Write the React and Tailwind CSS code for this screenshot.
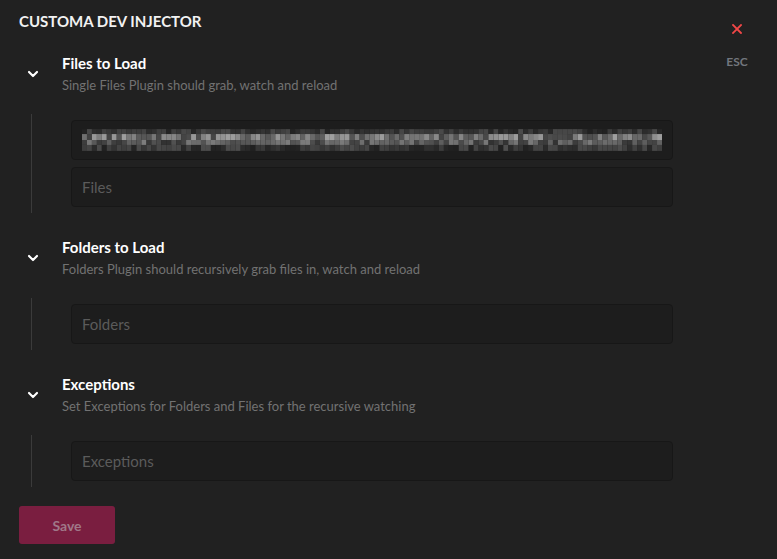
import { ChevronDown } from 'lucide-react';

const SECTIONS = [
  {
    title: 'Files to Load',
    note: 'Single Files Plugin should grab, watch and reload',
    fields: [{ blurred: true }, { placeholder: 'Files' }],
  },
  {
    title: 'Folders to Load',
    note: 'Folders Plugin should recursively grab files in, watch and reload',
    fields: [{ placeholder: 'Folders' }],
  },
  {
    title: 'Exceptions',
    note: 'Set Exceptions for Folders and Files for the recursive watching',
    fields: [{ placeholder: 'Exceptions' }],
  },
];

// pixelated path, stands in for the redacted value
function Mosaic() {
  let seed = 7;
  const rand = () => {
    seed = (seed * 16807) % 2147483647;
    return seed / 2147483647;
  };
  const rows = [
    { y: 0, h: 5, lo: 34, hi: 75 },
    { y: 5, h: 6, lo: 65, hi: 160 },
    { y: 11, h: 5, lo: 50, hi: 125 },
    { y: 16, h: 6, lo: 32, hi: 78 },
  ];
  const cells = [];
  rows.forEach((r, ri) => {
    for (let i = 0; i < 117; i++) {
      const v = Math.round(r.lo + rand() * (r.hi - r.lo));
      cells.push(
        <rect key={`${ri}-${i}`} x={i * 5} y={r.y} width="5" height={r.h} fill={`rgb(${v},${v},${v})`} />
      );
    }
  });
  return (
    <svg width="585" height="22" viewBox="0 0 585 22" className="block">
      {cells}
    </svg>
  );
}

function Field({ placeholder, blurred }) {
  return (
    <div className="flex h-[40px] w-[602px] items-center rounded-[4px] border border-[#171717] bg-[#1d1d1d] px-[10px]">
      {blurred ? (
        <Mosaic />
      ) : (
        <span className="text-[15px] text-[#5b5b5b]">{placeholder}</span>
      )}
    </div>
  );
}

function Section({ title, note, fields }) {
  return (
    <div className="flex flex-col">
      <div className="flex items-center">
        <div className="flex w-[43px] justify-start pl-[6px]">
          <ChevronDown size={16} strokeWidth={3.2} className="text-white" />
        </div>
        <div className="flex flex-col">
          <span className="text-[15px] font-bold leading-[20px] text-white">{title}</span>
          <span className="mt-[3px] text-[13px] leading-[18px] text-[#727272]">{note}</span>
        </div>
      </div>
      <div className="ml-[12px] mt-[20px] flex flex-col gap-[7px] border-l border-[#3b3b3b] py-[6px] pl-[39px]">
        {fields.map((f, i) => (
          <Field key={i} {...f} />
        ))}
      </div>
    </div>
  );
}

export default function App() {
  return (
    <div className="flex h-[559px] w-[777px] bg-[#212121] font-['Lato',sans-serif]">
      <div className="flex flex-1 flex-col pl-[19px] pt-[11px]">
        <h1 className="text-[15px] font-bold uppercase leading-[20px] text-[#f2f2f2]">Customa Dev Injector</h1>
        <div className="mt-[22px] flex flex-col gap-[24px]">
          {SECTIONS.map((s) => (
            <Section key={s.title} {...s} />
          ))}
        </div>
        <button className="mt-[19px] h-[38px] w-[96px] rounded-[3px] bg-[#7a1e40] text-[14px] font-bold text-[#a07888]">
          Save
        </button>
      </div>
      <div className="mr-[20px] flex w-[40px] flex-col items-center pt-[24px]">
        <svg width="10" height="10" viewBox="0 0 10 10" className="block">
          <path d="M1 1 L9 9 M9 1 L1 9" stroke="#f04747" strokeWidth="1.8" strokeLinecap="square" />
        </svg>
        <span className="mt-[21px] text-[12px] font-bold leading-[14px] text-[#72767d]">ESC</span>
      </div>
    </div>
  );
}
